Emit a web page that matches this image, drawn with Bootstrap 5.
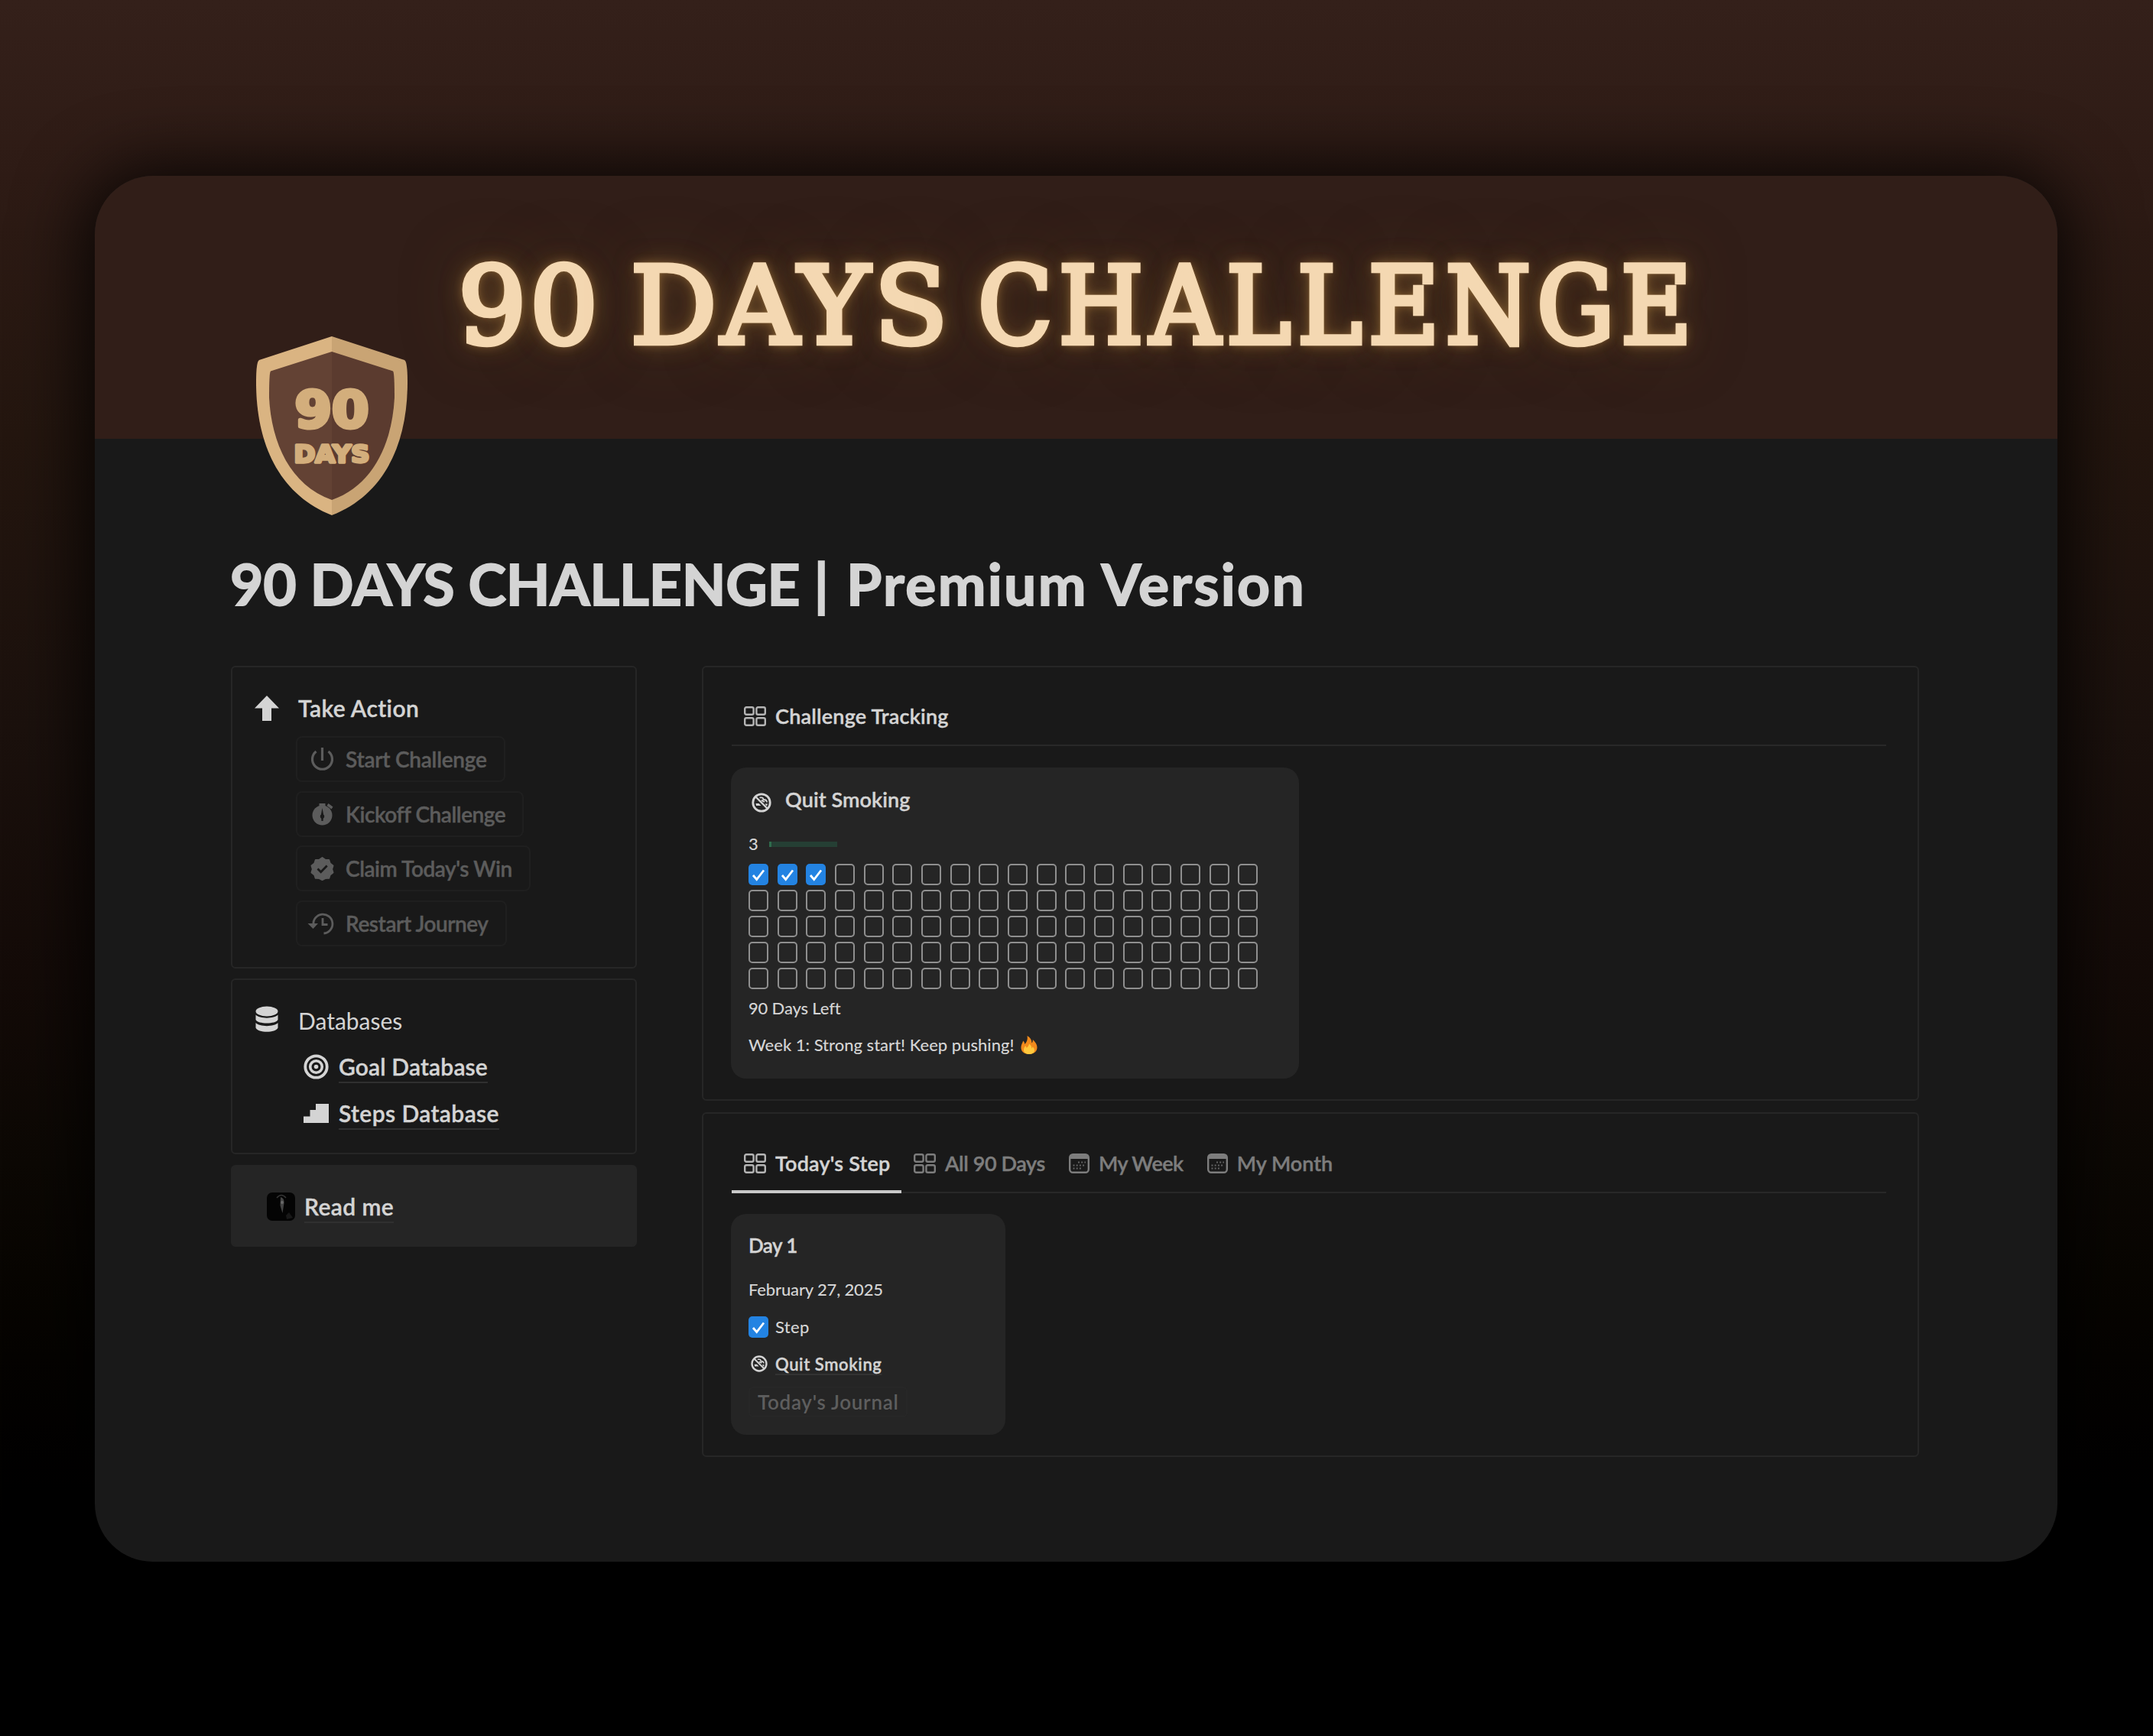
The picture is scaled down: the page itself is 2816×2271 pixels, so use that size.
<!DOCTYPE html>
<html lang="en">
<head>
<meta charset="utf-8">
<meta name="viewport" content="width=device-width, initial-scale=1">
<title>90 Days Challenge</title>
<link href="https://cdn.jsdelivr.net/npm/bootstrap@5.3.0/dist/css/bootstrap.min.css" rel="stylesheet">
<style>
  body { min-height: 2271px; padding-top: 229.5px; font-family: Lato, "Noto Sans", sans-serif; color: #d4d4d4; overflow: hidden;
    background: linear-gradient(180deg, #34201a 0, #2e1b15 10%, #24160f 25%, #1b110d 42%, #140b08 56%, #0c0804 67%, #050300 78%, #000 88%, #000 100%) no-repeat #000; }
  svg { display: block; flex: none; overflow: visible; }
  .page-window { width: 2567px; height: 1813px; margin-left: 124px; border-radius: 76px; background: #191919; box-shadow: 0 4px 90px 14px rgba(0,0,0,.82); }
  .hero { height: 344.5px; background: #311e18; border-radius: 76px 76px 0 0; overflow: hidden; padding: 0 0 2px 475px; }
  .hero-text { font: 400 141px/1.2 "DejaVu Serif", serif; color: #f4d8b2; white-space: nowrap; -webkit-text-stroke: 6.5px #f4d8b2;
    text-shadow: 0 0 5px rgba(206,160,92,.75), 0 0 14px rgba(184,138,72,.75), 0 0 30px rgba(160,116,56,.65), 0 0 80px rgba(110,78,34,.6); }
  .w-num { letter-spacing: 4px; margin-right: 38px; }
  .w-days { letter-spacing: 5.5px; margin-right: 34px; }
  .w-chal { letter-spacing: 8.5px; font-family: "DejaVu Serif Condensed", "DejaVu Serif", serif; }
  .page-body { padding: 0 182px 0 178px; }
  .shield { margin: -134.5px 0 0 33px; position: relative; z-index: 2; width: 199px; }
  .page-title { font-size: 75px; line-height: 90px; font-weight: 700; letter-spacing: -.2px; margin: 44.5px 0 63px -1px; white-space: nowrap; color: #d4d4d4; -webkit-text-stroke: 1.8px #d4d4d4; }
  .page-title span { letter-spacing: 2.3px; }
  .side { width: 531px; flex: none; margin-right: 85px; }
  .main-col { width: 1592px; flex: none; }
  .panel { border: 2px solid #262626; border-radius: 6px; }
  .p-action { height: 396px; margin-bottom: 13px; }
  .p-data { height: 230px; margin-bottom: 14px; }
  .p-read { height: 107px; background: #252525; border-color: #252525; padding: 1px 0 0 45px; gap: 12px; }
  .p-track { height: 569px; margin-bottom: 15px; }
  .p-steps { height: 451px; }
  .head { height: 34px; margin: 36px 0 0 29px; gap: 25px; font-size: 30px; line-height: 34px; }
  .fw-semi { font-weight: 600; -webkit-text-stroke: .4px; }
  .actions { margin: 20px 0 0 83px; gap: 11.7px; }
  .act { height: 60px; border: 2px solid #1f1f1f; border-radius: 8px; background: none; color: #5c5c5c; padding: 0 22px 0 17px; gap: 15px; font-size: 28px; font-weight: 600; line-height: 34px; letter-spacing: -.45px; white-space: nowrap; -webkit-text-stroke: .4px; }
  .act:first-child { letter-spacing: -.25px; }
  .db-list { margin: 12.5px 0 0 93px; }
  .db-item { height: 61px; gap: 13px; }
  .page-link-text { font-size: 30px; font-weight: 600; -webkit-text-stroke: .4px; line-height: 34px; letter-spacing: .4px; color: #d4d4d4; text-decoration: underline #303030 2px; text-underline-offset: 8px; text-decoration-skip-ink: none; }
  .goal { letter-spacing: .15px; }
  .tabs { margin: 0 41px 0 37px; height: 103px; border-bottom: 2px solid #282828; font-size: 27px; font-weight: 600; line-height: 34px; -webkit-text-stroke: .4px; }
  .p-steps .tabs { height: 104px; }
  .tab { height: 74px; padding: 0 15.5px; gap: 12px; color: #7d7d7d; white-space: nowrap; }
  .tab.current { color: #d4d4d4; height: 77px; padding: 3px 15px 0 16px; border-bottom: 4px solid transparent; margin-bottom: -2px; }
  .tab.current svg { color: #b5b5b5; }
  .tab.lined { border-bottom-color: #c9c9c9; }
  .tile { background: #252525; border-radius: 20px; margin-left: 36px; padding-left: 23px; font-size: 22px; font-weight: 500; line-height: 30px; }
  .tile-quit { width: 743px; height: 407px; margin-top: 28px; padding-top: 21.5px; }
  .tile-day { width: 359px; height: 289px; margin-top: 27px; padding-top: 21px; }
  .tile-head { height: 40px; font-size: 27px; font-weight: 600; line-height: 40px; -webkit-text-stroke: .4px; }
  .tile-head span { padding-left: 18px; letter-spacing: .1px; }
  .meter { width: 89px; height: 7px; background: #253f34; }
  .meter div { height: 7px; background: #2f6b4c; }
  .boxes { display: grid; grid-template-columns: repeat(18, 26px); column-gap: 11.66px; row-gap: 6px; margin-top: 10.5px; }
  .box { height: 28px; width: 26px; border: 2px solid #8f8f8f; border-radius: 5px; }
  .box.done { border: 0; background: #2383e2; }
  .journal { height: 40px; border: 2px solid #272727; border-radius: 6px; color: #5e5e5e; font-size: 26px; font-weight: 600; letter-spacing: .7px; padding: 0 10px; line-height: 34px; }
</style>
</head>
<body>
<svg width="0" height="0" class="position-absolute" aria-hidden="true">
  <defs>
    <symbol id="gallery" viewBox="0 0 29 26"><g fill="none" stroke="currentColor" stroke-width="2.4"><rect x="1.2" y="1.2" width="11.4" height="9.6" rx="2"/><rect x="16.4" y="1.2" width="11.4" height="9.6" rx="2"/><rect x="1.2" y="15.2" width="11.4" height="9.6" rx="2"/><rect x="16.4" y="15.2" width="11.4" height="9.6" rx="2"/></g></symbol>
    <symbol id="calendar" viewBox="0 0 27 26"><rect x="1.2" y="1.2" width="24.6" height="23.6" rx="4" fill="none" stroke="currentColor" stroke-width="2.4"/><path d="M1 7V5a4 4 0 0 1 4-4h17a4 4 0 0 1 4 4v2z" fill="currentColor"/><path d="M12 11.5h10M5.500 15.500h16M5.500 19.500h12" stroke="currentColor" stroke-width="2" stroke-dasharray="2 2.200" opacity=".75"/></symbol>
    <symbol id="nosmoke" viewBox="0 0 26 26"><circle cx="13" cy="13" r="11.200" fill="none" stroke="currentColor" stroke-width="2.800"/><path d="M5 5l16 16" stroke="currentColor" stroke-width="2.400"/><path d="M5.500 14h4l3 3H6zM17.500 14.500h3.500l-.8 2.500h-1z" fill="currentColor"/><path d="M10.500 6.300h2.500c2 0 2.500 1.700 2.500 2.700 3 0 4.500 1 4.500 3.500M13 9.500c1 2 3 1.500 4 2.500" fill="none" stroke="currentColor" stroke-width="1.800"/></symbol>
    <symbol id="tick" viewBox="0 0 26 28"><path d="M6 15l4.700 5.500L20 8.500" fill="none" stroke="#fff" stroke-width="2.800"/></symbol>
  </defs>
</svg>

<main class="page-window">
  <header class="hero d-flex align-items-center"><div class="hero-text d-flex align-items-baseline"><span class="w-num">90</span> <span class="w-days">DAYS</span> <span class="w-chal">CHALLENGE</span></div></header>

  <div class="page-body">
    <div class="shield">
      <svg width="199" height="234" viewBox="0 0 199 234">
        <defs>
          <linearGradient id="rim"><stop offset=".5" stop-color="#dab482"/><stop offset=".5" stop-color="#c9a474"/></linearGradient>
          <linearGradient id="core"><stop offset=".5" stop-color="#634234"/><stop offset=".5" stop-color="#5b3b2f"/></linearGradient>
        </defs>
        <path fill="url(#rim)" d="M99 0L194 31Q198 33 198 60C198 145 165 208 99 234C33 208 0 145 0 60Q0 33 4 31Z"/>
        <path fill="url(#core)" d="M99 20L179 45.500Q181 47 181 80C178 140 153 195 99 214C45 195 20 140 17 80Q17 47 19 45.500Z"/>
        <g font-family="DejaVu Sans, sans-serif" font-weight="700" text-anchor="middle" fill="#d3ae7c" stroke="#d3ae7c" stroke-linejoin="round">
          <text x="99" y="119" font-size="66" stroke-width="5" textLength="97" lengthAdjust="spacingAndGlyphs">90</text>
          <text x="99" y="164.500" font-size="32" stroke-width="3.500" textLength="99" lengthAdjust="spacingAndGlyphs">DAYS</text>
        </g>
      </svg>
    </div>

    <h1 class="page-title">90 DAYS CHALLENGE <span>| Premium Version</span></h1>

    <div class="d-flex align-items-start">
      <aside class="side d-flex flex-column">
        <section class="panel p-action">
          <div class="head d-flex align-items-center fw-semi">
            <svg width="32" height="33" viewBox="0 0 32 33"><path fill="#d4d4d4" d="M16 0L32 16.500H22V33H10V16.500H0Z"/></svg>
            <span style="letter-spacing:.4px">Take Action</span>
          </div>
          <div class="actions d-flex flex-column align-items-start">
            <button class="act d-flex align-items-center">
              <svg width="31" height="30" viewBox="0 0 31 30" fill="none" stroke="currentColor" stroke-width="3.200"><path d="M7.500 5A13 13 0 1 0 23.500 5"/><path d="M15.500 0v17"/></svg>Start Challenge</button>
            <button class="act d-flex align-items-center">
              <svg width="31" height="30" viewBox="0 0 31 30"><circle cx="15.500" cy="16.500" r="13" fill="currentColor"/><path fill="currentColor" d="M11.500 1h8v4h-8zM23.500 1l6 4.500-2 3-6-4.500z"/><path d="M15.500 7l1.500 8-.4 9h-2.200L14 15z" fill="#191919"/><circle cx="15.500" cy="18" r="2.700" fill="#191919"/></svg>Kickoff Challenge</button>
            <button class="act d-flex align-items-center">
              <svg width="31" height="30" viewBox="0 0 31 30"><path fill="currentColor" stroke="currentColor" stroke-width="2" stroke-linejoin="round" d="M15.500 1l3.900 2.800 4.800.2 1.500 4.500 3.800 3-1.400 4.500 1.400 4.500-3.800 3-1.500 4.300-4.800.2-3.900 2-3.900-2-4.800-.2-1.500-4.300-3.800-3L2.900 16 1.500 11.500l3.800-3L6.800 4l4.800-.2z"/><path d="M9.500 15.500l4.200 4.300 8-8.300" fill="none" stroke="#191919" stroke-width="2.800"/></svg>Claim Today's Win</button>
            <button class="act d-flex align-items-center">
              <svg width="31" height="30" viewBox="0 0 31 30" fill="none" stroke="currentColor" stroke-width="2.800"><path d="M4 17A12.500 12.500 0 1 1 17.500 28"/><path d="M16 8v8.500h6.500"/><path d="M-3.500 15H10L3.500 22z" fill="currentColor" stroke="none"/></svg>Restart Journey</button>
          </div>
        </section>

        <section class="panel p-data">
          <div class="head d-flex align-items-center">
            <svg width="32" height="35" viewBox="0 0 32 35" class="mb-1"><g fill="#d4d4d4"><ellipse cx="16" cy="7" rx="14.500" ry="6.500"/><path d="M1.500 11.500C6 17 26 17 30.500 11.500V18c-2.500 6-26.500 6-29 0z"/><path d="M1.500 22C6 27.500 26 27.500 30.500 22v6.500c-2.500 7-26.500 7-29 0z"/></g></svg>
            <span>Databases</span>
          </div>
          <div class="db-list d-flex flex-column">
            <div class="db-item d-flex align-items-center">
              <svg width="33" height="33" viewBox="0 0 33 33" fill="none" stroke="#d4d4d4"><circle cx="16.500" cy="16.500" r="14.200" stroke-width="3.800"/><circle cx="16.500" cy="16.500" r="7.800" stroke-width="3.600"/><circle cx="16.500" cy="16.500" r="2.800" fill="#d4d4d4" stroke="none"/></svg>
              <a class="page-link-text goal">Goal Database</a>
            </div>
            <div class="db-item d-flex align-items-center">
              <svg width="33" height="25" viewBox="0 0 33 25"><path fill="#d4d4d4" d="M0 25V16.500H8.500V8H16V0H33V25Z"/></svg>
              <a class="page-link-text">Steps Database</a>
            </div>
          </div>
        </section>

        <section class="panel p-read d-flex align-items-center">
          <svg width="37" height="37" viewBox="0 0 37 37"><rect width="37" height="37" rx="7" fill="#040404"/><path d="M13 7q6-7 12 0" fill="none" stroke="#333" stroke-width="1.500"/><path d="M18 6q5 1 4.500 8l-2 13-3-10z" fill="#444"/><circle cx="20" cy="13" r="2" fill="#6a6a6a"/><path d="M25 30l4-4 5 7-8 2z" fill="#181818"/></svg>
          <a class="page-link-text">Read me</a>
        </section>
      </aside>

      <div class="main-col d-flex flex-column">
        <section class="panel p-track">
          <div class="tabs d-flex align-items-end">
            <div class="tab current d-flex align-items-center"><svg width="29" height="26"><use href="#gallery"/></svg><span style="letter-spacing:.2px">Challenge Tracking</span></div>
          </div>
          <article class="tile tile-quit">
            <div class="tile-head d-flex align-items-center"><svg width="26" height="26" class="ms-1 mt-2"><use href="#nosmoke"/></svg><span>Quit Smoking</span></div>
            <div class="d-flex align-items-center" style="margin-top:23.5px"><span style="width:27px">3</span><div class="meter"><div style="width:3.3%"></div></div></div>
            <div class="boxes" id="days"></div>
            <div style="margin-top:10.5px;letter-spacing:-.15px">90 Days Left</div>
            <div class="d-flex align-items-center" style="margin-top:18px">Week 1: Strong start! Keep pushing!
              <svg width="22" height="24" viewBox="0 0 22 24" style="margin-left:9px"><path fill="#f28a1c" d="M11 24C4 24 0 20 .5 14.500 .8 11 2.500 9.500 3.200 6.500 4.800 8 5.300 9.500 5.300 11 8 8.500 9.500 4.500 8.500 0c4 2 6 5.500 6 9.500 1-.8 1.500-2.200 1.300-4.500C19 8 21.500 11 21.500 15 21.500 20.500 17.500 24 11 24z"/><path fill="#ffc83d" d="M11 24c-4.500 0-7.500-2.500-7-6.500.3-2 1.500-3 2.200-4.500.8 1 1.300 1.800 1.500 2.800 1.800-1.300 3-3 3.300-5.300 2.500 1.500 3.500 3.500 3.300 6 .8-.5 1.200-1.300 1.400-2.300 1.600 1.500 2.300 3 2.300 4.500 0 3.500-3 5.300-7 5.300z"/></svg></div>
          </article>
        </section>

        <section class="panel p-steps">
          <div class="tabs d-flex align-items-end">
            <div class="tab current lined d-flex align-items-center"><svg width="29" height="26"><use href="#gallery"/></svg><span style="letter-spacing:.2px">Today's Step</span></div>
            <div class="tab d-flex align-items-center"><svg width="29" height="26"><use href="#gallery"/></svg><span style="letter-spacing:-.4px">All 90 Days</span></div>
            <div class="tab d-flex align-items-center"><svg width="27" height="26"><use href="#calendar"/></svg><span style="letter-spacing:-.5px">My Week</span></div>
            <div class="tab d-flex align-items-center"><svg width="27" height="26"><use href="#calendar"/></svg><span>My Month</span></div>
          </div>
          <article class="tile tile-day">
            <div class="tile-head" style="font-size:26px;letter-spacing:-.6px">Day 1</div>
            <div style="margin-top:22.5px;letter-spacing:-.15px">February 27, 2025</div>
            <div class="d-flex align-items-center" style="margin-top:19px"><div class="box done"><svg width="26" height="28"><use href="#tick"/></svg></div><span style="padding-left:9px;letter-spacing:.3px">Step</span></div>
            <div class="d-flex align-items-center" style="margin-top:19px"><svg width="22" height="22" style="margin:0 10px 2px 3px"><use href="#nosmoke"/></svg><span class="fw-semi" style="letter-spacing:.6px;text-decoration:underline #333 1.5px;text-underline-offset:4px">Quit Smoking</span></div>
            <div class="d-flex" style="margin-top:14px"><button class="journal bg-transparent">Today's Journal</button></div>
          </article>
        </section>
      </div>
    </div>
  </div>
</main>

<script src="https://cdn.jsdelivr.net/npm/bootstrap@5.3.0/dist/js/bootstrap.bundle.min.js"></script>
<script>
  // 90 day boxes, the completed ones first
  const total = 90, completed = 3;
  document.getElementById('days').innerHTML = Array.from({ length: total }, (_, i) =>
    i < completed ? '<div class="box done"><svg width="26" height="28"><use href="#tick"/></svg></div>' : '<div class="box"></div>').join('');
</script>
</body>
</html>
